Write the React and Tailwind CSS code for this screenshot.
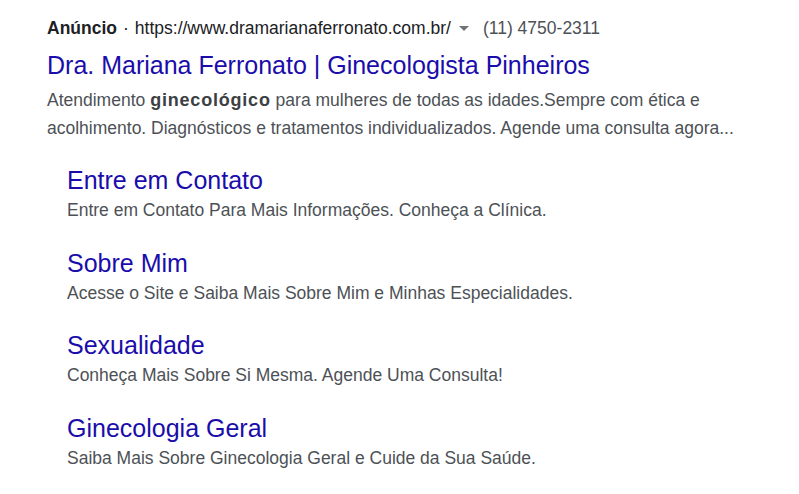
export default function App() {
  const links = [
    ["Entre em Contato", "Entre em Contato Para Mais Informações. Conheça a Clínica."],
    ["Sobre Mim", "Acesse o Site e Saiba Mais Sobre Mim e Minhas Especialidades."],
    ["Sexualidade", "Conheça Mais Sobre Si Mesma. Agende Uma Consulta!"],
    ["Ginecologia Geral", "Saiba Mais Sobre Ginecologia Geral e Cuide da Sua Saúde."],
  ];
  return (
    <div className="w-[799px] h-[494px] bg-white pl-[47px] pt-[16px] font-['Liberation_Sans',Arial,sans-serif] overflow-hidden">
      <div className="flex items-center h-[25px] text-[17.5px] leading-[25px] text-[#202124]">
        <span className="font-bold">Anúncio</span>
        <span className="px-[6px]">·</span>
        <span>https://www.dramarianaferronato.com.br/</span>
        <span className="ml-[8px] mr-[14px] w-0 h-0 border-l-[5px] border-r-[5px] border-t-[5px] border-l-transparent border-r-transparent border-t-[#70757a]"></span>
        <span className="text-[#4d5156]">(11) 4750-2311</span>
      </div>
      <div className="mt-[8px] text-[25px] leading-[32px] text-[#1a0dab]">
        Dra. Mariana Ferronato | Ginecologista Pinheiros
      </div>
      <div className="mt-[5px] w-[700px] h-[56px] text-[17.5px] leading-[28px] text-[#4d5156]">
        Atendimento <b className="font-bold text-[18px] tracking-[0.8px] leading-none text-[#3c4043]">ginecológico</b> para mulheres de todas as idades.Sempre com ética e acolhimento. Diagnósticos e tratamentos individualizados. Agende uma consulta agora...
      </div>
      <div className="pl-[20px] mt-[22px] flex flex-col gap-[22.5px]">
        {links.map(([t, d]) => (
          <div key={t}>
            <div className="text-[25px] leading-[32px] text-[#1a0dab]">{t}</div>
            <div className="text-[17.5px] leading-[28px] text-[#4d5156]">{d}</div>
          </div>
        ))}
      </div>
    </div>
  );
}
